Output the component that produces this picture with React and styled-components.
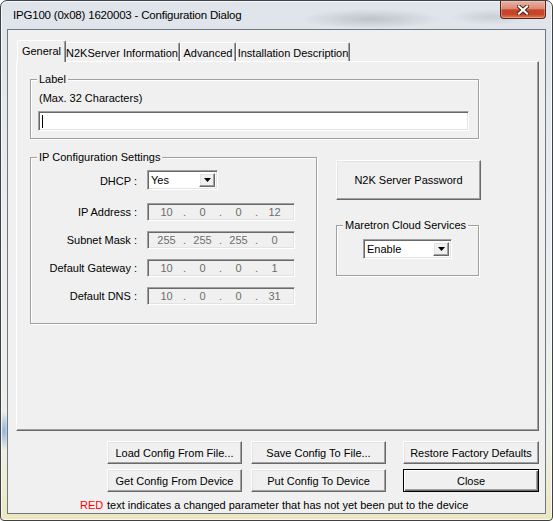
import styled, { createGlobalStyle, css } from "styled-components";

const GlobalStyle = createGlobalStyle`
  html, body {
    margin: 0;
    padding: 0;
    background: #fff;
  }
  body {
    font-family: "Liberation Sans", Arial, sans-serif;
    font-size: 11px;
    color: #000;
  }
  * {
    box-sizing: border-box;
  }
`;

const tabs = [
  { label: "General", width: 45, active: true },
  { label: "N2KServer Information", width: 116 },
  { label: "Advanced", width: 56 },
  { label: "Installation Description", width: 114 },
];

const ipRows = [
  { label: "IP Address :", value: ["10", "0", "0", "12"] },
  { label: "Subnet Mask :", value: ["255", "255", "255", "0"] },
  { label: "Default Gateway :", value: ["10", "0", "0", "1"] },
  { label: "Default DNS :", value: ["10", "0", "0", "31"] },
];

const raised = css`
  border: 1px solid;
  border-color: #fff #696969 #696969 #fff;
  box-shadow: inset -1px -1px 0 #a0a0a0, inset 1px 1px 0 #e3e3e3;
`;

const sunken = css`
  border: 1px solid;
  border-color: #a0a0a0 #fff #fff #a0a0a0;
  box-shadow: inset 1px 1px 0 #696969, inset -1px -1px 0 #e3e3e3;
`;

export default function App() {
  return (
    <>
      <GlobalStyle />
      <Window>
        <TitleBar>
          <Caption>IPG100 (0x08) 1620003 - Configuration Dialog</Caption>
          <CloseButton>
            <svg width="12" height="10" viewBox="0 0 12 10">
              <path
                d="M2 1.5 L10 8.5 M10 1.5 L2 8.5"
                stroke="#4a1d14"
                strokeWidth="4"
                strokeLinecap="square"
              />
              <path
                d="M2 1.5 L10 8.5 M10 1.5 L2 8.5"
                stroke="#fff"
                strokeWidth="2.2"
                strokeLinecap="square"
              />
            </svg>
          </CloseButton>
        </TitleBar>

        <Client>
          <TabStrip>
            {tabs.map((tab) => (
              <Tab key={tab.label} $w={tab.width} $active={tab.active}>
                {tab.label}
              </Tab>
            ))}
          </TabStrip>

          <Panel>
            <GroupBox $w={449}>
              <GroupTitle>Label</GroupTitle>
              <Hint>(Max. 32 Characters)</Hint>
              <TextBox>
                <Caret />
              </TextBox>
            </GroupBox>

            <BodyRow>
              <GroupBox $w={287} $pb={18}>
                <GroupTitle>IP Configuration Settings</GroupTitle>
                <FormGrid>
                  <FieldLabel>DHCP :</FieldLabel>
                  <Select $w={71}>
                    <SelectValue>Yes</SelectValue>
                    <DropButton>
                      <DownArrow />
                    </DropButton>
                  </Select>
                  {ipRows.map((row) => (
                    <FormRow key={row.label}>
                      <FieldLabel>{row.label}</FieldLabel>
                      <IpBox>
                        {row.value.map((octet, i) => (
                          <IpPart key={i}>
                            {i > 0 && <Dot>.</Dot>}
                            <Octet>{octet}</Octet>
                          </IpPart>
                        ))}
                      </IpBox>
                    </FormRow>
                  ))}
                </FormGrid>
              </GroupBox>

              <SideColumn>
                <PushButton $w={145} $h={40}>
                  N2K Server Password
                </PushButton>
                <CloudGroup $w={143} $pb={16}>
                  <GroupTitle>Maretron Cloud Services</GroupTitle>
                  <Select $w={89}>
                    <SelectValue>Enable</SelectValue>
                    <DropButton>
                      <DownArrow />
                    </DropButton>
                  </Select>
                </CloudGroup>
              </SideColumn>
            </BodyRow>
          </Panel>

          <ButtonGrid>
            <PushButton $w={135} $h={23}>Load Config From File...</PushButton>
            <PushButton $w={135} $h={23}>Save Config To File...</PushButton>
            <PushButton $w={136} $h={23} $end>
              Restore Factory Defaults
            </PushButton>
            <PushButton $w={135} $h={23}>Get Config From Device</PushButton>
            <PushButton $w={135} $h={23}>Put Config To Device</PushButton>
            <PushButton $w={136} $h={23} $end $default>
              Close
            </PushButton>
          </ButtonGrid>

          <Note>
            <RedWord>RED</RedWord>
            text indicates a changed parameter that has not yet been put to the
            device
          </Note>
        </Client>
      </Window>
    </>
  );
}

function DownArrow() {
  return (
    <svg width="7" height="4" viewBox="0 0 7 4">
      <polygon points="0,0 7,0 3.5,4" fill="#000" />
    </svg>
  );
}

const Window = styled.div`
  width: 553px;
  height: 521px;
  display: flex;
  flex-direction: column;
  padding: 0 6px 6px;
  border: 1px solid #3e4247;
  border-radius: 7px 7px 4px 4px;
  overflow: hidden;
  background:
    radial-gradient(ellipse 70px 10px at 370px 18px, rgba(150, 155, 160, 0.45), transparent),
    radial-gradient(ellipse 40px 8px at 490px 16px, rgba(160, 165, 170, 0.35), transparent),
    radial-gradient(ellipse 6px 20px at 3px 430px, rgba(80, 140, 210, 0.6), transparent),
    linear-gradient(to bottom, #dfe4ea 0%, #e9edf1 40%, #eef0e6 85%, #ece7bf 100%);
  box-shadow: inset 0 0 0 1px rgba(255, 255, 255, 0.7);
`;

const TitleBar = styled.div`
  height: 28px;
  display: flex;
  align-items: flex-start;
  justify-content: space-between;
  padding-left: 6px;
`;

const Caption = styled.div`
  margin-top: 7px;
  font-size: 11.5px;
  letter-spacing: -0.2px;
  line-height: 14px;
  color: #000;
`;

const CloseButton = styled.div`
  width: 46px;
  height: 18px;
  display: flex;
  align-items: center;
  justify-content: center;
  border: 1px solid #5b2219;
  border-top: none;
  border-radius: 0 0 4px 4px;
  background: linear-gradient(
    to bottom,
    #e9b3a5 0%,
    #dc8a76 45%,
    #c7452a 52%,
    #c64428 78%,
    #df7a54 100%
  );
  box-shadow: inset 0 0 0 1px rgba(255, 220, 200, 0.35);
`;

const Client = styled.div`
  flex: 1;
  display: flex;
  flex-direction: column;
  padding: 10px 6px 0 8px;
  border: 1px solid #6f7780;
  background: #f0f0f0;
`;

const TabStrip = styled.div`
  height: 21px;
  display: flex;
  align-items: flex-end;
  padding-left: 3px;
`;

const Tab = styled.div`
  position: relative;
  width: ${(p) => p.$w}px;
  height: 19px;
  display: flex;
  align-items: center;
  justify-content: center;
  white-space: nowrap;
  border: 1px solid;
  border-bottom: none;
  border-color: #fff #696969 transparent #fff;
  border-radius: 2px 2px 0 0;
  box-shadow: inset -1px 0 0 #a0a0a0;
  background: #f0f0f0;
  padding-top: 1px;

  ${(p) =>
    p.$active &&
    css`
      z-index: 1;
      width: ${p.$w + 4}px;
      height: 22px;
      margin: 0 -2px -1px -2px;
      padding-top: 0;
      padding-bottom: 2px;
    `}
`;

const Panel = styled.div`
  height: 370px;
  padding: 17px 13px 0 13px;
  border: 1px solid;
  border-color: #fff #696969 #696969 #fff;
  box-shadow: inset -1px -1px 0 #a0a0a0;
`;

const GroupBox = styled.div`
  width: ${(p) => p.$w}px;
  padding: 0 7px ${(p) => p.$pb ?? 7}px 7px;
  border: 1px solid #a0a0a0;
  box-shadow: inset 1px 1px 0 #fff, 1px 1px 0 #fff;
`;

const GroupTitle = styled.div`
  width: fit-content;
  margin: -7px 0 0 -1px;
  padding: 0 2px;
  line-height: 13px;
  background: #f0f0f0;
`;

const Hint = styled.div`
  margin-top: 6px;
  line-height: 13px;
  padding-left: 1px;
`;

const TextBox = styled.div`
  width: 431px;
  height: 20px;
  margin-top: 6px;
  display: flex;
  align-items: center;
  padding-left: 3px;
  background: #fff;
  ${sunken}
`;

const Caret = styled.span`
  width: 1px;
  height: 13px;
  background: #000;
`;

const BodyRow = styled.div`
  display: flex;
  align-items: flex-start;
  gap: 19px;
  margin-top: 18px;
`;

const FormGrid = styled.div`
  display: grid;
  grid-template-columns: 99px 148px;
  column-gap: 10px;
  row-gap: 10px;
  align-items: center;
  margin-top: 6px;

  & > ${() => Select} {
    margin-bottom: 3px;
  }
`;

const FormRow = styled.div`
  display: contents;
`;

const FieldLabel = styled.div`
  text-align: right;
  white-space: nowrap;
  line-height: 13px;
`;

const Select = styled.div`
  width: ${(p) => p.$w}px;
  height: 20px;
  display: flex;
  padding: 2px;
  background: #fff;
  ${sunken}
`;

const SelectValue = styled.div`
  flex: 1;
  display: flex;
  align-items: center;
  padding-left: 1px;
`;

const DropButton = styled.div`
  width: 16px;
  display: flex;
  align-items: center;
  justify-content: center;
  background: #f0f0f0;
  ${raised}
`;

const IpBox = styled.div`
  width: 148px;
  height: 18px;
  display: flex;
  align-items: center;
  padding-left: 6px;
  color: #6d6d6d;
  background: #f0f0f0;
  ${sunken}
`;

const IpPart = styled.div`
  display: flex;
`;

const Octet = styled.span`
  width: 25px;
  text-align: center;
`;

const Dot = styled.span`
  width: 11px;
  text-align: center;
`;

const SideColumn = styled.div`
  display: flex;
  flex-direction: column;
  gap: 25px;
  margin-top: 3px;
`;

const CloudGroup = styled(GroupBox)`
  display: flex;
  flex-direction: column;

  & > ${Select} {
    align-self: center;
    margin-top: 7px;
  }
`;

const PushButton = styled.button`
  width: ${(p) => p.$w}px;
  height: ${(p) => p.$h}px;
  padding: 0;
  font: inherit;
  color: #000;
  background: #f0f0f0;
  white-space: nowrap;
  justify-self: ${(p) => (p.$end ? "end" : "start")};
  ${raised}

  ${(p) =>
    p.$default &&
    css`
      border: 1px solid #000;
      box-shadow: inset 1px 1px 0 #fff, inset -1px -1px 0 #696969,
        inset -2px -2px 0 #a0a0a0;
    `}
`;

const ButtonGrid = styled.div`
  display: grid;
  grid-template-columns: 135px 135px 144px;
  column-gap: 9px;
  row-gap: 5px;
  margin: 10px 0 0 91px;
`;

const Note = styled.div`
  display: flex;
  margin-top: 7px;
  padding-left: 64px;
  line-height: 13px;
  white-space: nowrap;
`;

const RedWord = styled.span`
  width: 27px;
  color: #ff0000;
`;
